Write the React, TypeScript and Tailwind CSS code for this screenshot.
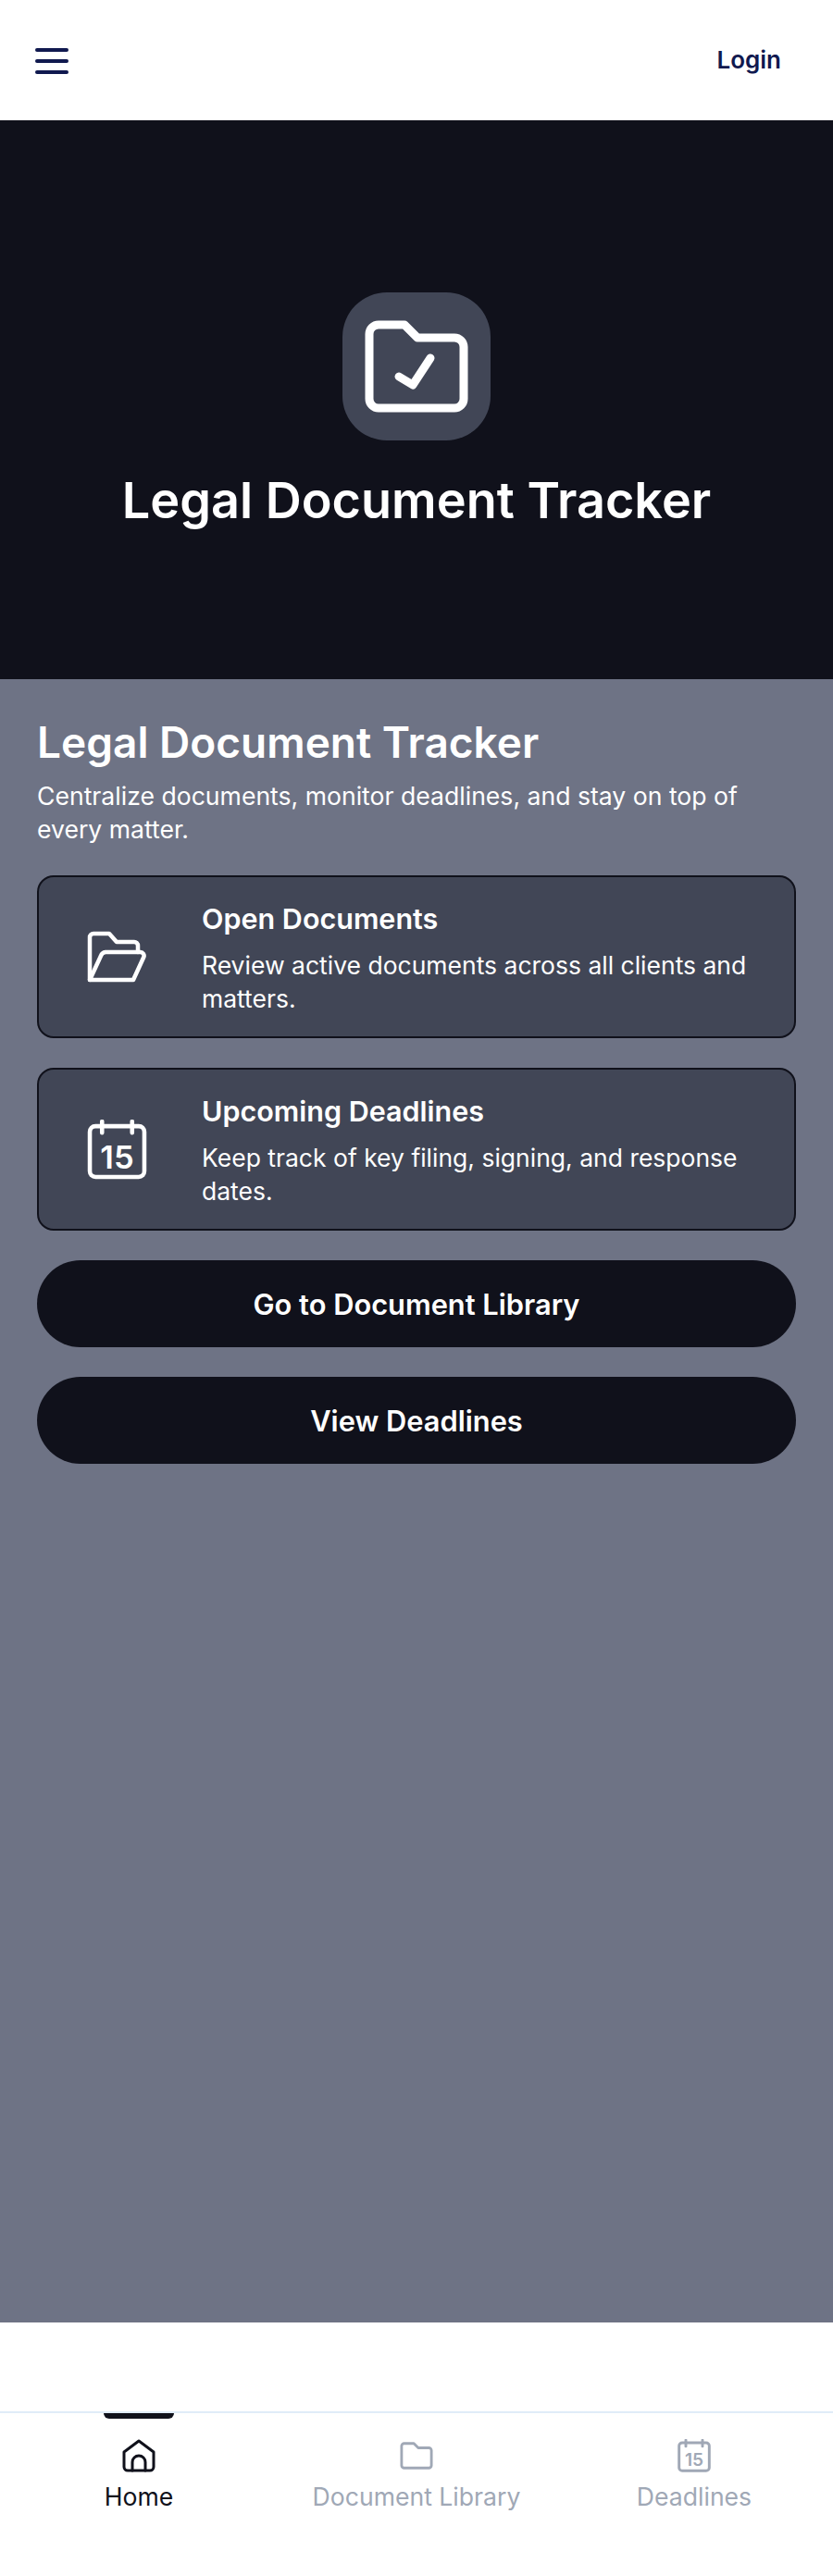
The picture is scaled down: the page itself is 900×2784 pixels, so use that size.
import React from "react";

const font = "font-['Inter','Liberation_Sans',sans-serif]";

const FolderCheckIcon = () => (
  <svg viewBox="0 0 112 100" className="h-[100px] w-[112px]" fill="none" stroke="currentColor" strokeWidth="9" strokeLinecap="round" strokeLinejoin="round">
    <path d="M15 5 H43 L57 19 H97 A10 10 0 0 1 107 29 V85 A10 10 0 0 1 97 95 H15 A10 10 0 0 1 5 85 V15 A10 10 0 0 1 15 5 Z" />
    <path d="M37 61 L52 70 L71 41" />
  </svg>
);

const FolderOpenIcon = () => (
  <svg viewBox="0 0 64 56" className="h-[56px] w-[64px]" fill="none" stroke="currentColor" strokeWidth="4.5" strokeLinecap="round" strokeLinejoin="round">
    <path d="M3 53 V7 A4 4 0 0 1 7 3 H24 L32 12 H51 A4 4 0 0 1 55 16 V23" />
    <path d="M3 53 L15 27 A6 6 0 0 1 20 23 H57 A4 4 0 0 1 61 29 L50 53 Z" />
  </svg>
);

const CalendarIcon = ({ className, strokeWidth }: { className: string; strokeWidth: number }) => (
  <svg viewBox="0 0 64 64" className={className} fill="none" stroke="currentColor" strokeWidth={strokeWidth} strokeLinecap="round" strokeLinejoin="round">
    <rect x="3" y="7" width="58" height="54" rx="6" />
    <path d="M16 2 V14 M48 2 V14" />
    <text x="32" y="52" textAnchor="middle" fill="currentColor" stroke="none" className="text-[34px] font-semibold">15</text>
  </svg>
);

const HomeIcon = () => (
  <svg viewBox="0 0 38 36" className="h-[36px] w-[38px]" fill="none" stroke="currentColor" strokeWidth="3" strokeLinecap="round" strokeLinejoin="round">
    <path d="M19 2 L35 14 V30 A4 4 0 0 1 31 34 H7 A4 4 0 0 1 3 30 V14 Z" />
    <path d="M12 34 V25 A7 7 0 0 1 26 25 V34" />
  </svg>
);

const FolderIcon = () => (
  <svg viewBox="0 0 38 32" className="h-[32px] w-[36px]" fill="none" stroke="currentColor" strokeWidth="3" strokeLinecap="round" strokeLinejoin="round">
    <path d="M5 2 H16 L21 7 H33 A3 3 0 0 1 36 10 V27 A3 3 0 0 1 33 30 H5 A3 3 0 0 1 2 27 V5 A3 3 0 0 1 5 2 Z" />
  </svg>
);

const InfoCard = ({ icon, title, text }: { icon: React.ReactNode; title: string; text: string }) => (
  <div className="flex h-[176px] items-center rounded-[18px] border-2 border-[#10111b] bg-[#414656] text-white">
    <div className="flex w-[168px] shrink-0 justify-center">{icon}</div>
    <div className="mt-[3px] ml-[8px] pr-[40px]">
      <h3 className="text-[30.5px] leading-[38px] font-semibold">{title}</h3>
      <p className="mt-[13px] text-[26.5px] leading-[36px]">{text}</p>
    </div>
  </div>
);

const NavItem = ({ icon, label, active }: { icon: React.ReactNode; label: string; active?: boolean }) => (
  <div className={`relative flex flex-1 flex-col items-center ${active ? "text-[#10111b]" : "text-[#a0a8b6]"}`}>
    {active && <div className="absolute top-0 h-[6px] w-[76px] rounded-b-[6px] bg-[#10111b]" />}
    <div className="mt-[28px] flex h-[36px] items-center justify-center">{icon}</div>
    <span className="mt-[8px] text-[26.6px] leading-[36px] font-normal">{label}</span>
  </div>
);

export default function App() {
  return (
    <div className={`flex h-[2784px] flex-col bg-white ${font}`}>
      <header className="flex h-[130px] items-center justify-between pr-[56px] pl-[38px] text-[#10194f]">
        <div className="flex w-[36px] flex-col gap-[8px] pt-[2px]">
          <span className="h-[4px] rounded-full bg-[#10194f]" />
          <span className="h-[4px] rounded-full bg-[#10194f]" />
          <span className="h-[4px] rounded-full bg-[#10194f]" />
        </div>
        <span className="pb-[2px] text-[26px] font-semibold">Login</span>
      </header>

      <section className="flex h-[604px] flex-col items-center bg-[#10111b] pt-[186px] text-white">
        <div className="flex h-[160px] w-[160px] items-center justify-center rounded-[48px] bg-[#414656]">
          <FolderCheckIcon />
        </div>
        <h1 className="mt-[33px] text-[54px] leading-[64px] font-semibold">Legal Document Tracker</h1>
      </section>

      <main className="flex h-[1776px] flex-col gap-[32px] bg-[#6e7385] px-[40px] pt-[40px] text-white">
        <div>
          <h2 className="text-[46px] leading-[56px] font-semibold">Legal Document Tracker</h2>
          <p className="mt-[12px] text-[26.6px] leading-[36px]">Centralize documents, monitor deadlines, and stay on top of every matter.</p>
        </div>
        <InfoCard icon={<FolderOpenIcon />} title="Open Documents" text="Review active documents across all clients and matters." />
        <InfoCard
          icon={<CalendarIcon className="h-[65px] w-[65px]" strokeWidth={4.5} />}
          title="Upcoming Deadlines"
          text="Keep track of key filing, signing, and response dates."
        />
        <button className="h-[94px] rounded-full bg-[#10111b] pt-[3px] text-[30.8px] font-semibold text-white">Go to Document Library</button>
        <button className="h-[94px] rounded-full bg-[#10111b] pt-[3px] text-[30.8px] font-semibold text-white">View Deadlines</button>
      </main>

      <div className="h-[96px]" />

      <nav className="flex flex-1 items-start border-t-2 border-[#e0ecf8]">
        <NavItem icon={<HomeIcon />} label="Home" active />
        <NavItem icon={<FolderIcon />} label="Document Library" />
        <NavItem icon={<CalendarIcon className="h-[36px] w-[36px]" strokeWidth={5.2} />} label="Deadlines" />
      </nav>
    </div>
  );
}
